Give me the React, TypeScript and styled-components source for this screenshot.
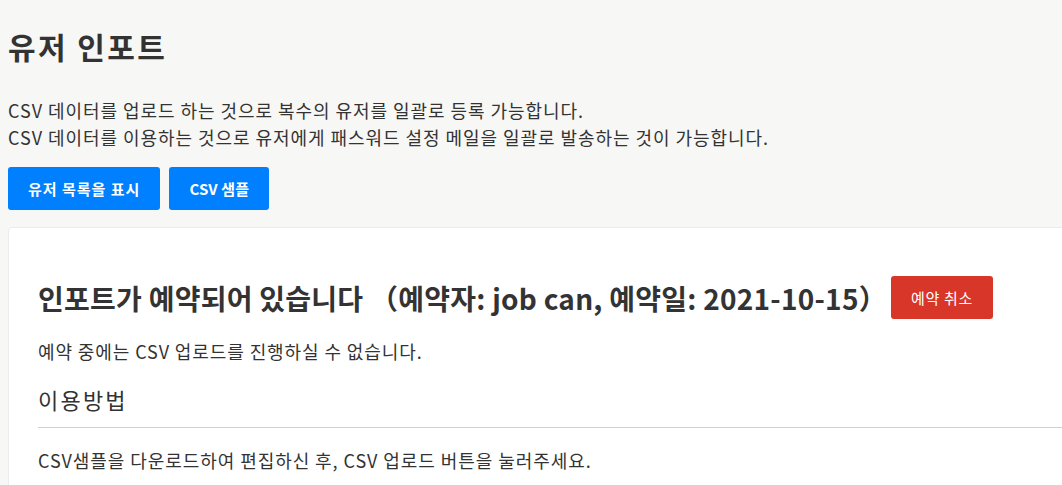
import React from "react";
import styled, { createGlobalStyle } from "styled-components";

const Global = createGlobalStyle`
  html, body { margin: 0; padding: 0; overflow: hidden; }
  body {
    background: #f7f7f5;
    font-family: "Noto Sans CJK KR", "Noto Sans CJK JP", "Noto Sans", sans-serif;
    color: #333;
  }
`;

const Page = styled.div`
  padding: 0 0 0 8px;
  width: 1100px;
`;

const Title = styled.h1`
  margin: 0;
  padding-top: 28px;
  font-size: 30px;
  font-weight: 700;
  line-height: 36px;
  letter-spacing: 2.4px;
  color: #333;
`;

const Description = styled.p`
  margin: 33px 0 0;
  font-size: 18px;
  line-height: 27px;
  letter-spacing: 0.95px;
`;

const ButtonRow = styled.div`
  display: flex;
  gap: 9px;
  margin-top: 16px;
`;

const Button = styled.button<{ $variant: "primary" | "danger"; $spacing?: string }>`
  height: 43px;
  border: none;
  border-radius: 3px;
  padding: 0 20px;
  font-family: inherit;
  font-size: 15px;
  font-weight: ${(p) => (p.$variant === "primary" ? 700 : 400)};
  letter-spacing: ${(p) => p.$spacing ?? "0.7px"};
  color: #fff;
  background: ${(p) => (p.$variant === "primary" ? "#0080ff" : "#d9362a")};
  cursor: pointer;
  white-space: nowrap;
`;

const Card = styled.section`
  margin-top: 17px;
  background: #fff;
  border-radius: 4px;
  border: 1px solid #ececec;
  padding: 48px 30px 20px 29px;
`;

const HeadingRow = styled.div`
  display: flex;
  align-items: center;
  gap: 4px;
`;

const CardHeading = styled.h2`
  margin: 0;
  font-size: 28px;
  font-weight: 700;
  line-height: 40px;
  letter-spacing: 0.25px;
  color: #333;
  white-space: nowrap;
`;

const Notice = styled.p`
  margin: 19px 0 0;
  font-size: 18px;
  line-height: 27px;
  letter-spacing: 0.9px;
`;

const SubHeading = styled.h3`
  margin: 18px 0 0;
  font-size: 22px;
  font-weight: 400;
  line-height: 33px;
  letter-spacing: 2.2px;
  padding-bottom: 11px;
  border-bottom: 1px solid #d0d0d0;
`;

const Body = styled.p`
  margin: 19px 0 0;
  font-size: 18px;
  line-height: 27px;
  letter-spacing: 0.93px;
`;

export default function App() {
  return (
    <>
      <Global />
      <Page>
        <Title>유저 인포트</Title>
        <Description>
          CSV 데이터를 업로드 하는 것으로 복수의 유저를 일괄로 등록 가능합니다.
          <br />
          CSV 데이터를 이용하는 것으로 유저에게 패스워드 설정 메일을 일괄로 발송하는 것이 가능합니다.
        </Description>
        <ButtonRow>
          <Button $variant="primary" $spacing="1px">유저 목록을 표시</Button>
          <Button $variant="primary" $spacing="0.1px">CSV 샘플</Button>
        </ButtonRow>
        <Card>
          <HeadingRow>
            <CardHeading>인포트가 예약되어 있습니다 （예약자: job can, 예약일: 2021-10-15）</CardHeading>
            <Button $variant="danger">예약 취소</Button>
          </HeadingRow>
          <Notice>예약 중에는 CSV 업로드를 진행하실 수 없습니다.</Notice>
          <SubHeading>이용방법</SubHeading>
          <Body>CSV샘플을 다운로드하여 편집하신 후, CSV 업로드 버튼을 눌러주세요.</Body>
        </Card>
      </Page>
    </>
  );
}
